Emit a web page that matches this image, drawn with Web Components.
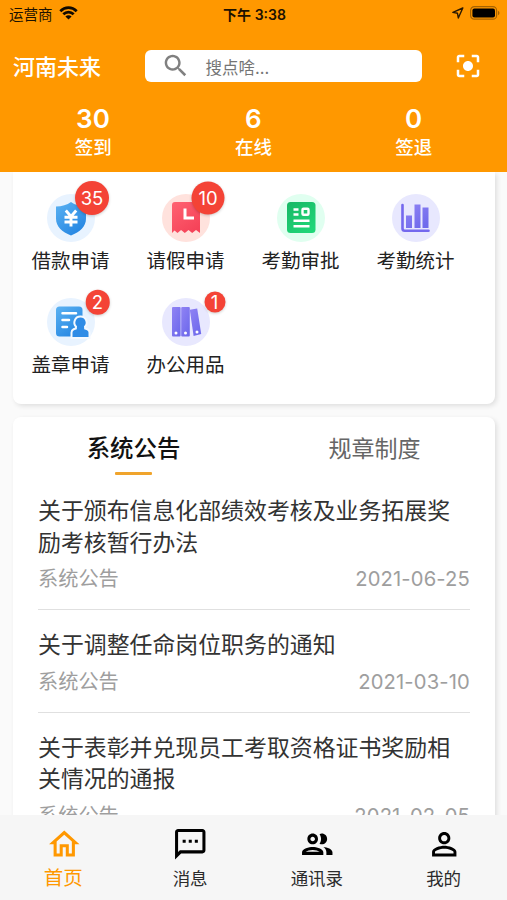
<!DOCTYPE html>
<html lang="zh-CN">
<head>
<meta charset="utf-8">
<title>河南未来</title>
<style>
html,body{margin:0;padding:0}
body{width:507px;height:900px;overflow:hidden;background:#fafafa;font-family:Inter,"Noto Sans CJK SC",sans-serif;color:#222}
</style>
</head>
<body>
<app-home></app-home>
<script>
const define = (name, html, setup) => {
  const t = document.createElement('template');
  t.innerHTML = html;
  customElements.define(name, class extends HTMLElement {
    constructor() {
      super();
      this.attachShadow({mode: 'open'}).appendChild(t.content.cloneNode(true));
    }
    connectedCallback() { if (setup) setup(this, this.shadowRoot); }
  });
};

const paths = {
  search: 'M15.5 14h-.79l-.28-.27C15.41 12.59 16 11.11 16 9.5 16 5.91 13.09 3 9.5 3S3 5.91 3 9.5 5.91 16 9.5 16c1.61 0 3.09-.59 4.23-1.57l.27.28v.79l5 4.99L20.49 19l-4.99-5zm-6 0C7.01 14 5 11.99 5 9.5S7.01 5 9.5 5 14 7.01 14 9.5 11.99 14 9.5 14z',
  focus: 'M12 8c-2.21 0-4 1.79-4 4s1.79 4 4 4 4-1.79 4-4-1.79-4-4-4zm-7 7H3v4c0 1.1.9 2 2 2h4v-2H5v-4zM5 5h4V3H5c-1.1 0-2 .9-2 2v4h2V5zm14-2h-4v2h4v4h2V5c0-1.1-.9-2-2-2zm0 16h-4v2h4c1.1 0 2-.9 2-2v-4h-2v4z',
  home: 'M12 5.69l5 4.5V18h-2v-6H9v6H7v-7.81l5-4.5M12 3L2 12h3v8h6v-6h2v6h6v-8h3L12 3z',
  sms: 'M20 2H4c-1.1 0-1.99.9-1.99 2L2 22l4-4h14c1.1 0 2-.9 2-2V4c0-1.1-.9-2-2-2zm0 14H5.17L4 17.17V4h16v12zM7 9h2v2H7zm4 0h2v2h-2zm4 0h2v2h-2z',
  group: 'M9 13.75c-2.34 0-7 1.17-7 3.5V19h14v-1.75c0-2.33-4.66-3.5-7-3.5zM4.34 17c.84-.58 2.87-1.25 4.66-1.25s3.82.67 4.66 1.25H4.34zM9 12c1.93 0 3.5-1.57 3.5-3.5S10.93 5 9 5 5.5 6.57 5.5 8.500 7.07 12 9 12zm0-5c.83 0 1.5.67 1.5 1.5S9.830 10 9 10s-1.5-.67-1.5-1.5S8.17 7 9 7zm7.04 6.81c1.16.84 1.96 1.96 1.96 3.44V19h4v-1.75c0-2.02-3.5-3.17-5.96-3.44zM15 12c1.93 0 3.5-1.57 3.5-3.5S16.93 5 15 5c-.54 0-1.04.13-1.5.35.63.89 1 1.98 1 3.15s-.37 2.26-1 3.15c.46.22.96.35 1.5.35z',
  person: 'M12 5.9c1.16 0 2.1.94 2.1 2.1s-.94 2.1-2.1 2.1S9.9 9.16 9.9 8s.94-2.1 2.1-2.1m0 9c2.97 0 6.1 1.46 6.1 2.1v1.1H5.9V17c0-.64 3.13-2.1 6.1-2.1M12 4C9.79 4 8 5.79 8 8s1.79 4 4 4 4-1.79 4-4-1.79-4-4-4zm0 9c-2.67 0-8 1.34-8 4v3h16v-3c0-2.66-5.33-4-8-4z'
};

define('ui-icon', `<style>:host{display:block;width:24px;height:24px}svg{display:block;width:100%;height:100%}</style>
<svg viewBox="0 0 24 24" fill="currentColor"><path/></svg>`,
  (el, r) => r.querySelector('path').setAttribute('d', paths[el.getAttribute('name')]));

define('status-bar', `<style>
:host{display:grid;grid-template-columns:1fr auto 1fr;align-items:center;height:27px;padding:0 7px 0 9px;color:#1c1100;font-size:14.5px;box-sizing:border-box}
.l{display:flex;align-items:center;gap:6px}
.t{font-weight:600;font-size:14px}
.r{display:flex;align-items:center;justify-content:flex-end;gap:6px}
svg{display:block}
.l svg,.r svg{margin-top:-2px}
</style>
<div class="l"><span>运营商</span>
<svg width="19" height="14" viewBox="0 0 19 14" fill="none" stroke="#110a00" stroke-width="2.7"><path d="M1.300 5.200C6 .4 13 .4 17.700 5.200"/><path d="M4.300 8.300c3-3 7.400-3 10.400 0"/><path d="M9.500 13.400 6.400 10.400c1.800-1.500 4.400-1.500 6.200 0z" fill="#110a00" stroke="none"/></svg></div>
<span class="t">下午 3:38</span>
<div class="r">
<svg width="12" height="12" viewBox="0 0 12 12" fill="none" stroke="#2a1900" stroke-width="1.4" stroke-linejoin="round"><path d="M10.800 1 .9 5.400l4.600.9.800 4.700z"/></svg>
<svg width="30" height="14" viewBox="0 0 30 14"><rect x=".6" y=".6" width="26" height="12.600" rx="3.800" fill="none" stroke="#a66300" stroke-width="1.200"/><rect x="2.400" y="2.400" width="22.600" height="9" rx="2" fill="#000"/><path d="M28 4.800c2 .8 2 3.600 0 4.400z" fill="#a66300"/></svg>
</div>`);

define('search-box', `<style>
:host{display:flex;align-items:center;height:32px;width:277px;box-sizing:border-box;background:#fff;border-radius:6px;padding-left:16px;color:#757575;font-size:16.5px}
ui-icon{width:29.5px;height:29.5px;margin-right:15px;color:#808080}
span{padding-top:2px}
</style><ui-icon name="search"></ui-icon><span><slot></slot></span>`);

define('stat-item', `<style>
:host{display:flex;flex-direction:column;align-items:center;flex:1;color:#fff}
b{font-size:26px;line-height:31px;font-weight:600;letter-spacing:.3px}
span{font-size:18.5px;line-height:26px;font-weight:500}
</style><b></b><span><slot></slot></span>`,
  (el, r) => r.querySelector('b').textContent = el.getAttribute('value'));

define('app-header', `<style>
:host{display:block;background:#ff9800;height:171.5px;flex:none;position:relative}
.bar{display:flex;align-items:center;height:78px;padding:0 24px 0 13px}
h1{margin:0;width:132px;font-size:22px;font-weight:500;color:#fff;line-height:30px;padding-top:1px}
.scan{width:30px;height:30px;color:#fff;margin-left:auto}
.stats{display:flex;padding:0 13px;margin-top:-2px}
</style>
<status-bar></status-bar>
<div class="bar"><h1>河南未来</h1><search-box>搜点啥...</search-box><ui-icon class="scan" name="focus"></ui-icon></div>
<div class="stats"><stat-item value="30">签到</stat-item><stat-item value="6">在线</stat-item><stat-item value="0">签退</stat-item></div>`);

const art = {
  loan: `<circle cx="24" cy="24" r="24" fill="#e8f3ff"/><path d="M24 8c4 3 9 4.300 15 4.500v12c0 8-6 13.500-15 17-9-3.500-15-9-15-17v-12C15 12.300 20 11 24 8z" fill="url(#b)"/><path d="m18.800 16.500 5.200 6 5.200-6M24 22v10.500M17.500 23.300h13M17.500 28h13" fill="none" stroke="#fff" stroke-width="2.900"/>`,
  leave: `<circle cx="24" cy="24" r="24" fill="#ffe2dd"/><path d="M13 8h22a3 3 0 0 1 3 3v28l-4-3-3.800 3-3.700-3-3.700 3-3.700-3-3.600 3-3-2.500L10 39V11a3 3 0 0 1 3-3z" fill="url(#r)"/><path d="M23 14.500v9.500H32" fill="none" stroke="#fff" stroke-width="3"/>`,
  approve: `<circle cx="24" cy="24" r="24" fill="#e0fff0"/><rect x="10" y="8" width="28.500" height="31" rx="3.500" fill="url(#g)"/><path d="M16.500 15.500h5M16.500 20.500h5M16.500 26.800h16M16.500 32.300h16" stroke="#fff" stroke-width="2.500"/><rect x="25.500" y="14.700" width="6" height="6" rx="1" fill="none" stroke="#fff" stroke-width="2.400"/>`,
  chart: `<circle cx="24" cy="24" r="24" fill="#e8e8fe"/><path d="M10.500 11v23.500a2.200 2.200 0 0 0 2.200 2.200H36.500" fill="none" stroke="#7468ee" stroke-width="2.600" stroke-linecap="round"/><path d="M14 21.500h6V34h-6zM22.500 10.500h6V34h-6zM30.500 13.500h6V34h-6z" fill="url(#p)"/>`,
  seal: `<circle cx="24" cy="24" r="24" fill="#e8f3ff"/><rect x="9" y="8.500" width="26.500" height="30" rx="3.500" fill="url(#b)"/><path d="M15.500 15.200h13.500M15.500 22h6.500M15.500 29h4.500" stroke="#fff" stroke-width="2.500" stroke-linecap="round"/><path d="M33.500 19.500a5 5 0 0 1 3.500 8.700l.2 3 2.800 1a2.500 2.500 0 0 1 1.500 2.300v4.500h-16v-4.500a2.500 2.500 0 0 1 1.500-2.300l2.800-1 .2-3a5 5 0 0 1 3.500-8.700z" fill="#2f8ce6" stroke="#f4f9ff" stroke-width="4" paint-order="stroke"/>`,
  books: `<circle cx="24" cy="24" r="24" fill="#e8e8fe"/><rect x="10" y="9" width="8.600" height="29.500" rx="1" fill="url(#p)"/><rect x="19.200" y="9" width="8.600" height="29.500" rx="1" fill="url(#p)"/><path d="m27.800 11.800 7.400-1.300L39.200 36l-7.600 2z" fill="url(#p)"/><g fill="#fff"><circle cx="14" cy="35" r="1.500"/><circle cx="23.500" cy="35" r="1.500"/><circle cx="35" cy="34" r="1.500"/></g>`
};
const grad = (id, a, b) => `<linearGradient id="${id}" x1="0" y1="0" x2=".7" y2="1"><stop offset="0" stop-color="${a}"/><stop offset="1" stop-color="${b}"/></linearGradient>`;
const defs = '<defs>' + grad('b', '#5bb2f2', '#2586e2') + grad('r', '#ff6372', '#f54359') + grad('g', '#18b765', '#20d678') + grad('p', '#9083f4', '#6f6aec') + '</defs>';

define('app-tile', `<style>
:host{display:flex;flex-direction:column;align-items:center;width:115px;height:104px}
.pic{position:relative;width:48px;height:48px}
svg{display:block}
.badge{position:absolute;left:var(--bx);top:var(--by);width:var(--bs);height:var(--bs);transform:translate(-50%,-50%);border-radius:50%;background:#f44336;color:#fff;font-size:18.5px;line-height:1;display:flex;align-items:center;justify-content:center;box-shadow:0 1px 3px #0003}
.badge:empty{display:none}
.label{font-size:19.5px;line-height:28px;margin-top:4.5px;white-space:nowrap}
</style><div class="pic"><svg width="48" height="48" viewBox="0 0 48 48"></svg><div class="badge"></div></div><div class="label"><slot></slot></div>`,
  (el, r) => {
    r.querySelector('svg').innerHTML = defs + art[el.getAttribute('art')];
    r.querySelector('.badge').textContent = el.getAttribute('badge') || '';
  });

define('ui-card', `<style>:host{display:block;background:#fff;border-radius:8px;box-shadow:2px 2px 5px #0000001c;margin:0 12px 0 13px;box-sizing:border-box}</style><slot></slot>`);

define('tab-strip', `<style>
:host{display:flex;height:59.5px}
div{flex:1;display:flex;flex-direction:column;align-items:center;font-size:23px;line-height:32px;padding-top:16px;color:#666}
.on{color:#111;font-weight:500;font-size:23.4px}
i{width:37px;height:3px;margin-top:7.5px;background:#f0a42c;border-radius:1px;flex:none}
</style><div class="on">系统公告<i></i></div><div>规章制度</div>`);

define('notice-item', `<style>
:host{display:block;margin:0 25px;padding:20px 0 15px;border-bottom:1.5px solid #e0e0e0}
.title{font-size:22.9px;line-height:31.5px;color:#333;width:418px}
.meta{display:flex;justify-content:space-between;font-size:20.2px;line-height:30px;color:#9e9e9e;margin-top:5px}
.date{letter-spacing:.15px}
</style><div class="title"><slot></slot></div><div class="meta"><span>系统公告</span><span class="date"></span></div>`,
  (el, r) => r.querySelector('.date').textContent = el.getAttribute('date'));

define('nav-item', `<style>
:host{flex:1;display:flex;flex-direction:column;align-items:center;color:#000;font-size:17.5px}
:host([active]){color:#ff9800;font-size:19.5px}
ui-icon{width:36.5px;height:36.5px;margin-top:10.5px;margin-left:1px}
span{line-height:26px;margin-top:4px;color:#2b2b2b}
:host([active]) span{color:#ff9800;margin-top:2.5px}
</style><ui-icon></ui-icon><span><slot></slot></span>`,
  (el, r) => {
    const old = r.querySelector('ui-icon');
    const icon = document.createElement('ui-icon');
    icon.setAttribute('name', el.getAttribute('icon'));
    old.replaceWith(icon);
  });

define('bottom-nav', `<style>:host{display:flex;height:85px;flex:none;background:#f6f6f6;position:relative}</style><slot></slot>`);

define('app-home', `<style>
:host{display:flex;flex-direction:column;width:507px;height:900px;overflow:hidden}
main{flex:1;min-height:0;overflow:hidden}
.apps{border-radius:0 0 8px 8px;height:232.5px;padding-top:22.5px;margin-bottom:12.5px}
.grid{display:grid;grid-template-columns:repeat(4,115px)}
</style>
<app-header></app-header>
<main>
<ui-card class="apps"><div class="grid">
<app-tile art="loan" badge="35" style="--bx:45.5px;--by:4px;--bs:34px">借款申请</app-tile>
<app-tile art="leave" badge="10" style="--bx:46.5px;--by:4px;--bs:33px">请假申请</app-tile>
<app-tile art="approve">考勤审批</app-tile>
<app-tile art="chart">考勤统计</app-tile>
<app-tile art="seal" badge="2" style="--bx:51px;--by:4px;--bs:24.5px">盖章申请</app-tile>
<app-tile art="books" badge="1" style="--bx:53px;--by:4px;--bs:21px">办公用品</app-tile>
</div></ui-card>
<ui-card><tab-strip></tab-strip>
<notice-item date="2021-06-25">关于颁布信息化部绩效考核及业务拓展奖励考核暂行办法</notice-item>
<notice-item date="2021-03-10">关于调整任命岗位职务的通知</notice-item>
<notice-item date="2021-02-05">关于表彰并兑现员工考取资格证书奖励相关情况的通报</notice-item>
</ui-card>
</main>
<bottom-nav>
<nav-item icon="home" active>首页</nav-item><nav-item icon="sms">消息</nav-item><nav-item icon="group">通讯录</nav-item><nav-item icon="person">我的</nav-item>
</bottom-nav>`);
</script>
</body>
</html>
